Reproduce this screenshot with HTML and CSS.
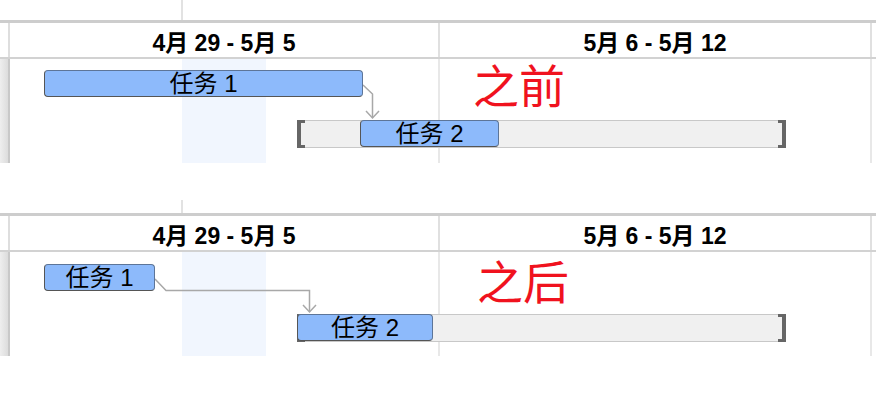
FILE: index.html
```html
<!DOCTYPE html>
<html lang="zh">
<head>
  <meta charset="UTF-8">
  <meta name="viewport" content="width=device-width, initial-scale=1.0">
  <title>任务依赖</title>
  <link rel="stylesheet" href="styles.css">
</head>
<body>
  <!-- before: task 2 waits on task 1 -->
  <section class="gantt">
    <div class="gantt-top"><span class="top-tick"></span></div>
    <div class="gantt-head">
      <div class="side"></div>
      <div class="week">4月 29 - 5月 5</div>
      <div class="week wide">5月 6 - 5月 12</div>
      <div class="rest"></div>
    </div>
    <div class="gantt-body">
      <div class="side"></div>
      <div class="canvas">
        <div class="week"></div>
        <div class="week wide"></div>
        <div class="rest"></div>
        <div class="weekend"></div>

        <div class="summary" style="left: 287px; top: 61px; width: 489px;"></div>
        <svg class="links" width="866" height="104">
          <polyline points="353,26 362.5,35 362.5,59" />
          <polyline points="356,52 362.5,59 369,52" />
        </svg>
        <div class="bar" style="left: 34px; top: 11px; width: 319px;">任务 1</div>
        <div class="bar" style="left: 350px; top: 61px; width: 139px;">任务 2</div>

        <div class="note" style="left: 463px; top: 1px;">之前</div>
      </div>
    </div>
  </section>

  <!-- after: task 1 shortened, task 2 moved up -->
  <section class="gantt">
    <div class="gantt-top cut"><span class="top-tick"></span></div>
    <div class="gantt-head">
      <div class="side"></div>
      <div class="week">4月 29 - 5月 5</div>
      <div class="week wide">5月 6 - 5月 12</div>
      <div class="rest"></div>
    </div>
    <div class="gantt-body">
      <div class="side"></div>
      <div class="canvas">
        <div class="week"></div>
        <div class="week wide"></div>
        <div class="rest"></div>
        <div class="weekend"></div>

        <div class="summary" style="left: 287px; top: 62px; width: 489px;"></div>
        <svg class="links" width="866" height="104">
          <polyline points="145,27 156,38.5 299.5,38.5 299.5,60" />
          <polyline points="293,53 299.5,60 306,53" />
        </svg>
        <div class="bar" style="left: 34px; top: 12px; width: 111px;">任务 1</div>
        <div class="bar" style="left: 287px; top: 62px; width: 136px;">任务 2</div>

        <div class="note" style="left: 467px; top: 4px;">之后</div>
      </div>
    </div>
  </section>
</body>
</html>
```

FILE: styles.css
```css
/* Gantt snippet styles */
body {
  font-family: "Liberation Sans", "Noto Sans CJK SC", sans-serif;
  background-color: #fff;
  color: #000;
  margin: 0;
  padding: 0;
}

.gantt {
  height: 163px;
}

.gantt + .gantt {
  margin-top: 30px;
}

/* strip above the timeline header */
.gantt-top {
  height: 20px;
  padding-left: 181px;
  box-sizing: border-box;
  height: 23px;
  border-bottom: 3px solid #cdcdcd;
}

.top-tick {
  display: block;
  width: 2px;
  height: 100%;
  background-color: #e2e2e2;
}

.gantt-top.cut {
  padding-top: 7px;
}

.gantt-head {
  display: flex;
  height: 34px;
  border-bottom: 2px solid #d2d2d2;
}

.side {
  flex: none;
  width: 8px;
  border-right: 2px solid #dedede;
}

.week {
  flex: none;
  width: 428px;
  border-right: 2px solid #e0e0e0;
}

.week.wide {
  width: 430px;
}

.rest {
  flex: 1;
}

.gantt-head .week {
  font-size: 23px;
  font-weight: bold;
  text-align: center;
  line-height: 28px;
  padding-top: 6px;
  box-sizing: border-box;
  width: 430px;
}

.gantt-head .week.wide {
  width: 432px;
}

.gantt-body {
  display: flex;
  height: 104px;
}

.gantt-body .side {
  background: linear-gradient(to right, #eeeeee, #dcdcdc);
  border-right-color: #c8c8c8;
}

.canvas {
  position: relative;
  flex: 1;
  display: flex;
}

.canvas .week {
  border-right-color: #e8e8e8;
}

.weekend {
  position: absolute;
  left: 172px;
  top: 0;
  width: 84px;
  height: 100%;
  background-color: #f1f6fe;
}

/* summary track with brackets at both ends */
.summary {
  position: absolute;
  height: 28px;
  box-sizing: border-box;
  background-color: #f0f0f0;
  border-top: 1px solid #c8c8c8;
  border-bottom: 1px solid #c8c8c8;
}

.summary::before,
.summary::after {
  content: "";
  position: absolute;
  top: -1px;
  bottom: -1px;
  width: 4px;
  border: solid #666;
  border-width: 3px 0;
}

.summary::before {
  left: 0;
  border-left-width: 4px;
}

.summary::after {
  right: 0;
  border-right-width: 4px;
}

.links {
  position: absolute;
  left: 0;
  top: 0;
  pointer-events: none;
}

.links polyline {
  fill: none;
  stroke: #a8a8a8;
  stroke-width: 1.5;
}

.bar {
  position: absolute;
  height: 27px;
  box-sizing: border-box;
  background-color: #8dbafb;
  border: 1px solid #5d7598;
  border-left-color: #555;
  border-bottom-color: #555;
  border-radius: 4px;
  font-size: 24px;
  line-height: 25px;
  text-align: center;
  white-space: nowrap;
}

.note {
  position: absolute;
  font-family: "Noto Sans CJK SC", sans-serif;
  font-size: 46px;
  line-height: 1;
  color: #f0121e;
}
```
